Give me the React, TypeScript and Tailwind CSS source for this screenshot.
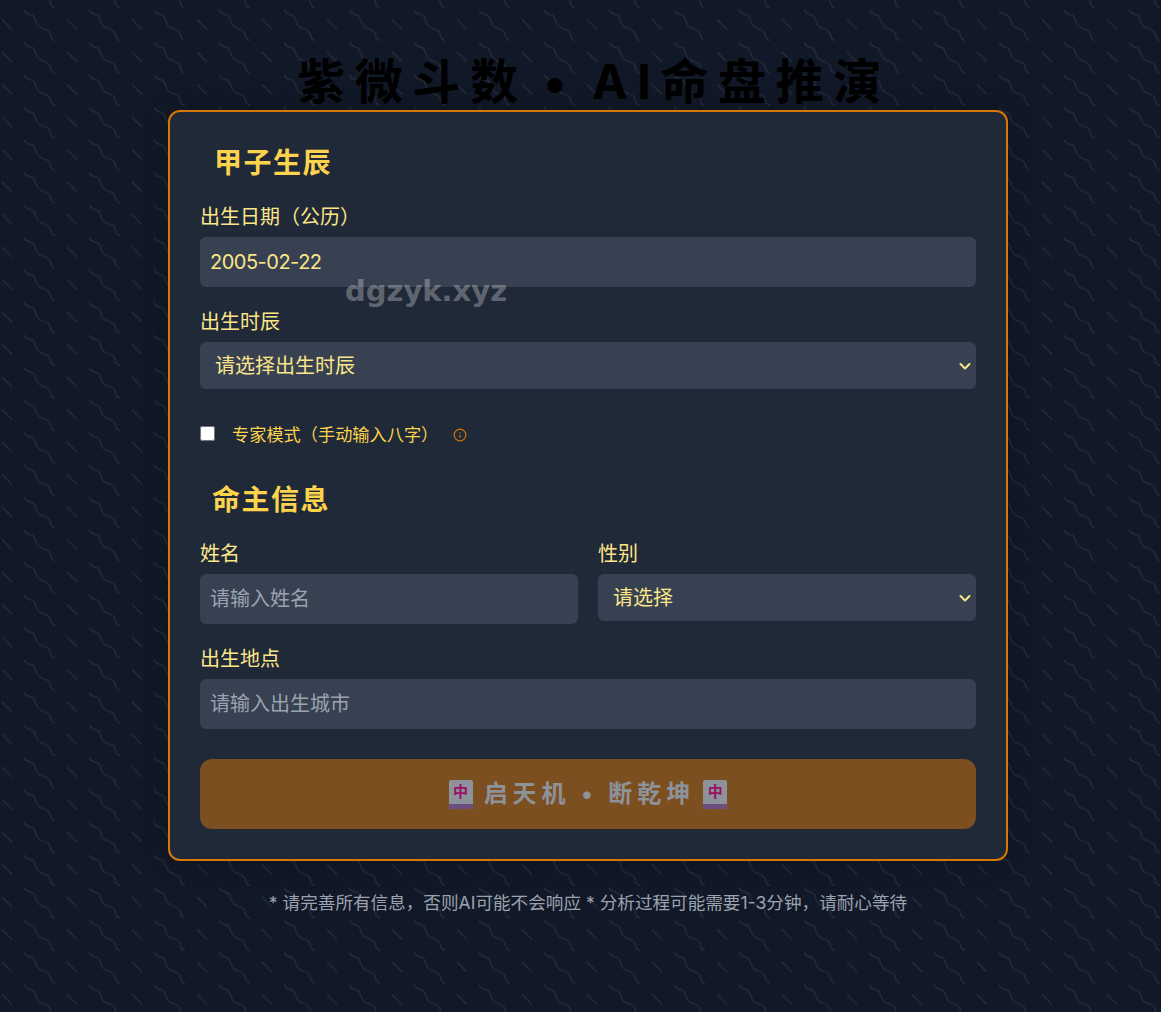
import { Info } from 'lucide-react';

function MahjongTile() {
  return (
    <span className="inline-flex h-[29px] w-[24px] flex-col overflow-hidden rounded-[2px] bg-[#8d929b] tracking-normal">
      <span className="flex flex-1 items-center justify-center text-[15px] font-bold leading-none text-[#9a1166]">中</span>
      <span className="h-[5px] bg-[#6b4d80]" />
    </span>
  );
}

function ChevronIcon() {
  return (
    <svg width="12" height="12" viewBox="0 0 12 12" fill="none" stroke="#fde68a" strokeWidth="2" strokeLinecap="round" strokeLinejoin="round">
      <path d="M1.5 4 L6 8.5 L10.5 4" />
    </svg>
  );
}

export default function App() {
  const fieldClass =
    'block w-full rounded-md bg-[#374151] px-[10px] h-[50px] text-[20px] text-[#fde68a] placeholder:text-[#9ca3af] outline-none';
  const selectClass =
    'flex h-[47px] w-full items-center justify-between rounded-md bg-[#374151] pl-[15px] pr-[5px] text-[20px] text-[#fde68a]';
  const labelClass = 'block text-[20px] leading-[30px] text-[#fde68a] mb-[5px]';

  return (
    <div className="relative min-h-[1012px] overflow-hidden bg-[#111827] font-['Inter','Noto_Sans_CJK_SC',sans-serif]">
      {/* wavy background */}
      <svg className="absolute inset-0 h-full w-full" aria-hidden="true">
        <defs>
          <pattern id="wiggle" x="24" y="9.5" width="65" height="32.5" patternUnits="userSpaceOnUse">
            <path
              d="M0 0 C1 4 5 5 9 6 C12 8 11 14 15 17 C18 20 24 19 26 24 C27 28 27 30 31 31"
              fill="none"
              stroke="#ffffff"
              strokeOpacity="0.08"
              strokeWidth="1.5"
            />
            <path d="M43 10 L53 20" fill="none" stroke="#ffffff" strokeOpacity="0.08" strokeWidth="1.5" />
          </pattern>
        </defs>
        <rect width="100%" height="100%" fill="url(#wiggle)" />
      </svg>

      <div className="relative ml-[168px] w-[840px] pt-[46px]">
        <h1 className="h-[64px] whitespace-nowrap pl-[12px] text-center text-[48px] font-bold leading-[72px] tracking-[9.6px] [word-spacing:-5px] text-black">
          紫微斗数 • AI命盘推演
        </h1>

        {/* form card */}
        <div className="relative rounded-xl border-2 border-[#d97706] bg-[#1f2937] px-[30px] py-[30px] shadow-[0_0_30px_rgba(0,0,0,0.2)]">
          <h2 className="mb-[18px] pl-[14px] text-[28px] font-bold leading-[42px] tracking-[1.5px] text-[#fcd34d]">甲子生辰</h2>

          <div className="mb-[20px]">
            <label className={labelClass}>出生日期（公历）</label>
            <div className={fieldClass + ' flex items-center tracking-[-0.5px]'}>2005-02-22</div>
          </div>

          <div>
            <label className={labelClass}>出生时辰</label>
            <div className={selectClass}>
              <span>请选择出生时辰</span>
              <ChevronIcon />
            </div>
          </div>

          <div className="mt-[31px] flex h-[27px] items-center">
            <input type="checkbox" className="mt-[-1px] h-[15px] w-[15px]" readOnly />
            <span className="ml-[17px] mt-[2px] text-[17.2px] text-[#fcd34d]">专家模式（手动输入八字）</span>
            <Info className="ml-[15px] mt-[2px] h-[14px] w-[14px] text-[#d97706]" />
          </div>

          <h2 className="mt-[32px] mb-[18px] pl-[12px] text-[28px] font-bold leading-[42px] tracking-[1.5px] text-[#fcd34d]">命主信息</h2>

          <div className="mb-[20px] grid grid-cols-2 gap-[20px]">
            <div>
              <label className={labelClass}>姓名</label>
              <input className={fieldClass} placeholder="请输入姓名" />
            </div>
            <div>
              <label className={labelClass}>性别</label>
              <div className={selectClass}>
                <span>请选择</span>
                <ChevronIcon />
              </div>
            </div>
          </div>

          <div className="mb-[30px]">
            <label className={labelClass}>出生地点</label>
            <input className={fieldClass} placeholder="请输入出生城市" />
          </div>

          <button className="flex h-[70px] w-full items-center justify-center gap-[8px] rounded-xl bg-[#7c4f20] text-[24px] font-bold tracking-[5px] text-[#8d929b]">
            <MahjongTile />
            <span className="pl-[3px]">启天机 • 断乾坤</span>
            <MahjongTile />
          </button>

          {/* watermark */}
          <div className="absolute left-[175px] top-[155px] font-['DejaVu_Sans',sans-serif] text-[29px] font-bold leading-[48px] text-white/30">
            dgzyk.xyz
          </div>
        </div>

        <p className="mt-[28px] text-center text-[17.6px] leading-[27px] text-[#9ca3af]">
          * 请完善所有信息，否则AI可能不会响应 * 分析过程可能需要1-3分钟，请耐心等待
        </p>
      </div>
    </div>
  );
}
